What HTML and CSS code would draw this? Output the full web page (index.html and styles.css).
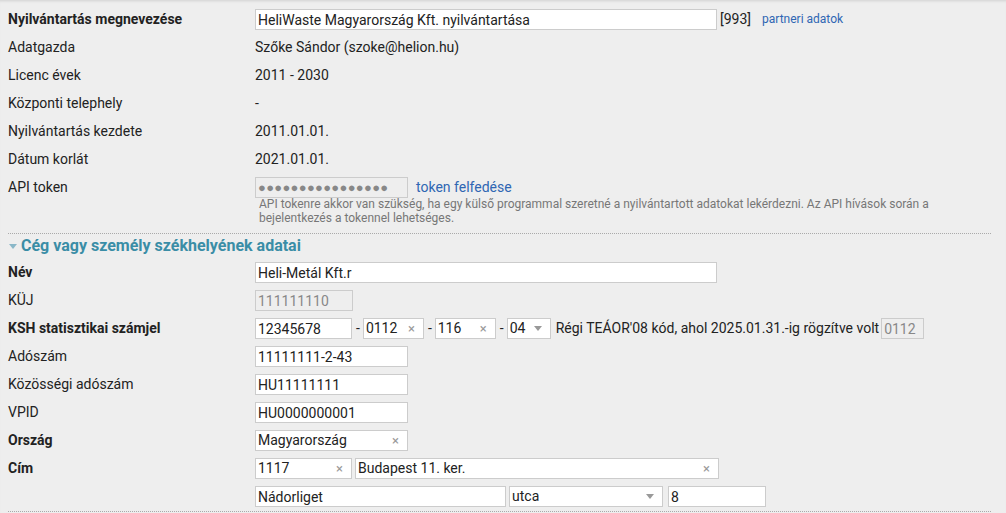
FILE: index.html
```html
<!DOCTYPE html>
<html lang="hu">
<head>
    <meta charset="UTF-8">
    <meta name="viewport" content="width=device-width, initial-scale=1.0">
    <title>Nyilvántartás adatai</title>
    <link rel="stylesheet" href="styles.css">
</head>
<body>
    <div class="page">
        <!-- Alapadatok -->
        <div class="row">
            <div class="label bold">Nyilvántartás megnevezése</div>
            <div class="value">
                <input class="field w-name" type="text" value="HeliWaste Magyarország Kft. nyilvántartása">
                <span class="id">[993]</span>
                <a class="small-link" href="#">partneri adatok</a>
            </div>
        </div>
        <div class="row">
            <div class="label">Adatgazda</div>
            <div class="value text">Szőke Sándor (szoke@helion.hu)</div>
        </div>
        <div class="row">
            <div class="label">Licenc évek</div>
            <div class="value text">2011 - 2030</div>
        </div>
        <div class="row">
            <div class="label">Központi telephely</div>
            <div class="value text">-</div>
        </div>
        <div class="row">
            <div class="label">Nyilvántartás kezdete</div>
            <div class="value text">2011.01.01.</div>
        </div>
        <div class="row">
            <div class="label">Dátum korlát</div>
            <div class="value text">2021.01.01.</div>
        </div>
        <div class="row row-api">
            <div class="label">API token</div>
            <div class="value">
                <div class="line">
                    <input class="field disabled w-mid token" type="text" value="●●●●●●●●●●●●●●●●" disabled>
                    <a class="link" href="#">token felfedése</a>
                </div>
                <div class="help">API tokenre akkor van szükség, ha egy külső programmal szeretné a nyilvántartott adatokat lekérdezni. Az API hívások során a bejelentkezés a tokennel lehetséges.</div>
            </div>
        </div>

        <!-- Székhely -->
        <div class="section">
            <h2 class="section-title"><span class="caret"></span>Cég vagy személy székhelyének adatai</h2>

            <div class="row">
                <div class="label bold">Név</div>
                <div class="value">
                    <input class="field w-name" type="text" value="Heli-Metál Kft.r">
                </div>
            </div>
            <div class="row">
                <div class="label">KÜJ</div>
                <div class="value">
                    <input class="field disabled w-short" type="text" value="111111110" disabled>
                </div>
            </div>
            <div class="row">
                <div class="label bold">KSH statisztikai számjel</div>
                <div class="value">
                    <input class="field w-ksh" type="text" value="12345678">
                    <span class="dash">-</span>
                    <div class="select w-61"><span>0112</span><span class="clear">×</span></div>
                    <span class="dash">-</span>
                    <div class="select w-61"><span>116</span><span class="clear">×</span></div>
                    <span class="dash">-</span>
                    <div class="select w-44"><span>04</span><span class="arrow"></span></div>
                    <span class="note">Régi TEÁOR'08 kód, ahol 2025.01.31.-ig rögzítve volt</span>
                    <input class="field disabled w-old" type="text" value="0112" disabled>
                </div>
            </div>
            <div class="row">
                <div class="label">Adószám</div>
                <div class="value">
                    <input class="field w-mid" type="text" value="11111111-2-43">
                </div>
            </div>
            <div class="row">
                <div class="label">Közösségi adószám</div>
                <div class="value">
                    <input class="field w-mid" type="text" value="HU11111111">
                </div>
            </div>
            <div class="row">
                <div class="label">VPID</div>
                <div class="value">
                    <input class="field w-mid" type="text" value="HU0000000001">
                </div>
            </div>
            <div class="row">
                <div class="label bold">Ország</div>
                <div class="value">
                    <div class="select w-mid"><span>Magyarország</span><span class="clear">×</span></div>
                </div>
            </div>
            <div class="row row-address">
                <div class="label bold">Cím</div>
                <div class="value">
                    <div class="line">
                        <div class="select w-zip"><span>1117</span><span class="clear">×</span></div>
                        <div class="select w-city"><span>Budapest 11. ker.</span><span class="clear">×</span></div>
                    </div>
                    <div class="line">
                        <input class="field w-street" type="text" value="Nádorliget">
                        <div class="select w-type"><span>utca</span><span class="arrow"></span></div>
                        <input class="field w-no" type="text" value="8">
                    </div>
                </div>
            </div>
        </div>
    </div>
</body>
</html>
```

FILE: styles.css
```css
body {
    font-family: Roboto, "Liberation Sans", Arial, sans-serif;
    font-size: 14px;
    color: #222;
    background-color: #eeeeee;
    margin: 0;
    box-shadow: inset 0 3px 3px -2px rgba(0, 0, 0, 0.12);
    min-height: 513px;
}
.page {
    padding: 5px 15px 0 8px;
}
.row {
    display: flex;
    align-items: flex-start;
    padding: 4px 0 3px;
}
.label {
    width: 247px;
    flex-shrink: 0;
    line-height: 21px;
}
.bold {
    font-weight: bold;
}
.value {
    display: flex;
    align-items: center;
    flex-wrap: wrap;
    line-height: 21px;
}
.value.text {
    display: block;
}
.row-api .value,
.row-address .value {
    display: block;
}
.line {
    display: flex;
    align-items: center;
}
.row-address .line + .line {
    margin-top: 7px;
}
.field {
    box-sizing: border-box;
    height: 21px;
    border: 1px solid #cccccc;
    background: #fff;
    font-family: inherit;
    font-size: 14px;
    color: #222;
    padding: 0 2px;
    margin: 0;
    outline: none;
}
.field.disabled {
    background: #eeeeee;
    color: #888;
}
.token {
    color: #666;
    font-size: 13px;
    letter-spacing: 0.3px;
}
.w-name { width: 462px; }
.w-mid { width: 153px; }
.w-short { width: 98px; }
.w-ksh { width: 97px; }
.w-61 { width: 61px; }
.w-44 { width: 44px; }
.w-old { width: 43px; }
.w-zip { width: 97px; }
.w-city { width: 364px; margin-left: 3px; }
.w-street { width: 251px; }
.w-type { width: 154px; margin-left: 3px; }
.w-no { width: 98px; margin-left: 5px; }
.id {
    margin-left: 3px;
}
.small-link {
    font-size: 12px;
    color: #2f66b3;
    text-decoration: none;
    margin-left: 11px;
}
.link {
    color: #2f66b3;
    text-decoration: none;
    margin-left: 8px;
}
.help {
    font-size: 12px;
    line-height: 14px;
    color: #777;
    padding-left: 4px;
    max-width: 672px;
    margin-top: -1px;
    padding-bottom: 5px;
}
.row-api {
    border-bottom: 1px dotted #aaaaaa;
}
.section-title {
    font-size: 16px;
    color: #3a8da6;
    margin: 0;
    line-height: 20px;
    padding: 2px 0 2px 1px;
    display: flex;
    align-items: center;
}
.caret {
    display: inline-block;
    width: 0;
    height: 0;
    border-left: 4px solid transparent;
    border-right: 4px solid transparent;
    border-top: 5px solid #8ab7c8;
    margin-right: 4px;
}
.section {
    border-bottom: 1px dotted #aaaaaa;
    padding-bottom: 1px;
}
.select {
    box-sizing: border-box;
    height: 21px;
    border: 1px solid #cccccc;
    background: #fff;
    display: flex;
    align-items: center;
    justify-content: space-between;
    padding: 0 8px 0 2px;
}
.clear {
    color: #999;
    font-size: 13px;
}
.arrow {
    width: 0;
    height: 0;
    border-left: 4px solid transparent;
    border-right: 4px solid transparent;
    border-top: 5px solid #999;
}
.dash {
    margin: 0 3px 0 4px;
}
.note {
    margin: 0 2px 0 5px;
}
```
